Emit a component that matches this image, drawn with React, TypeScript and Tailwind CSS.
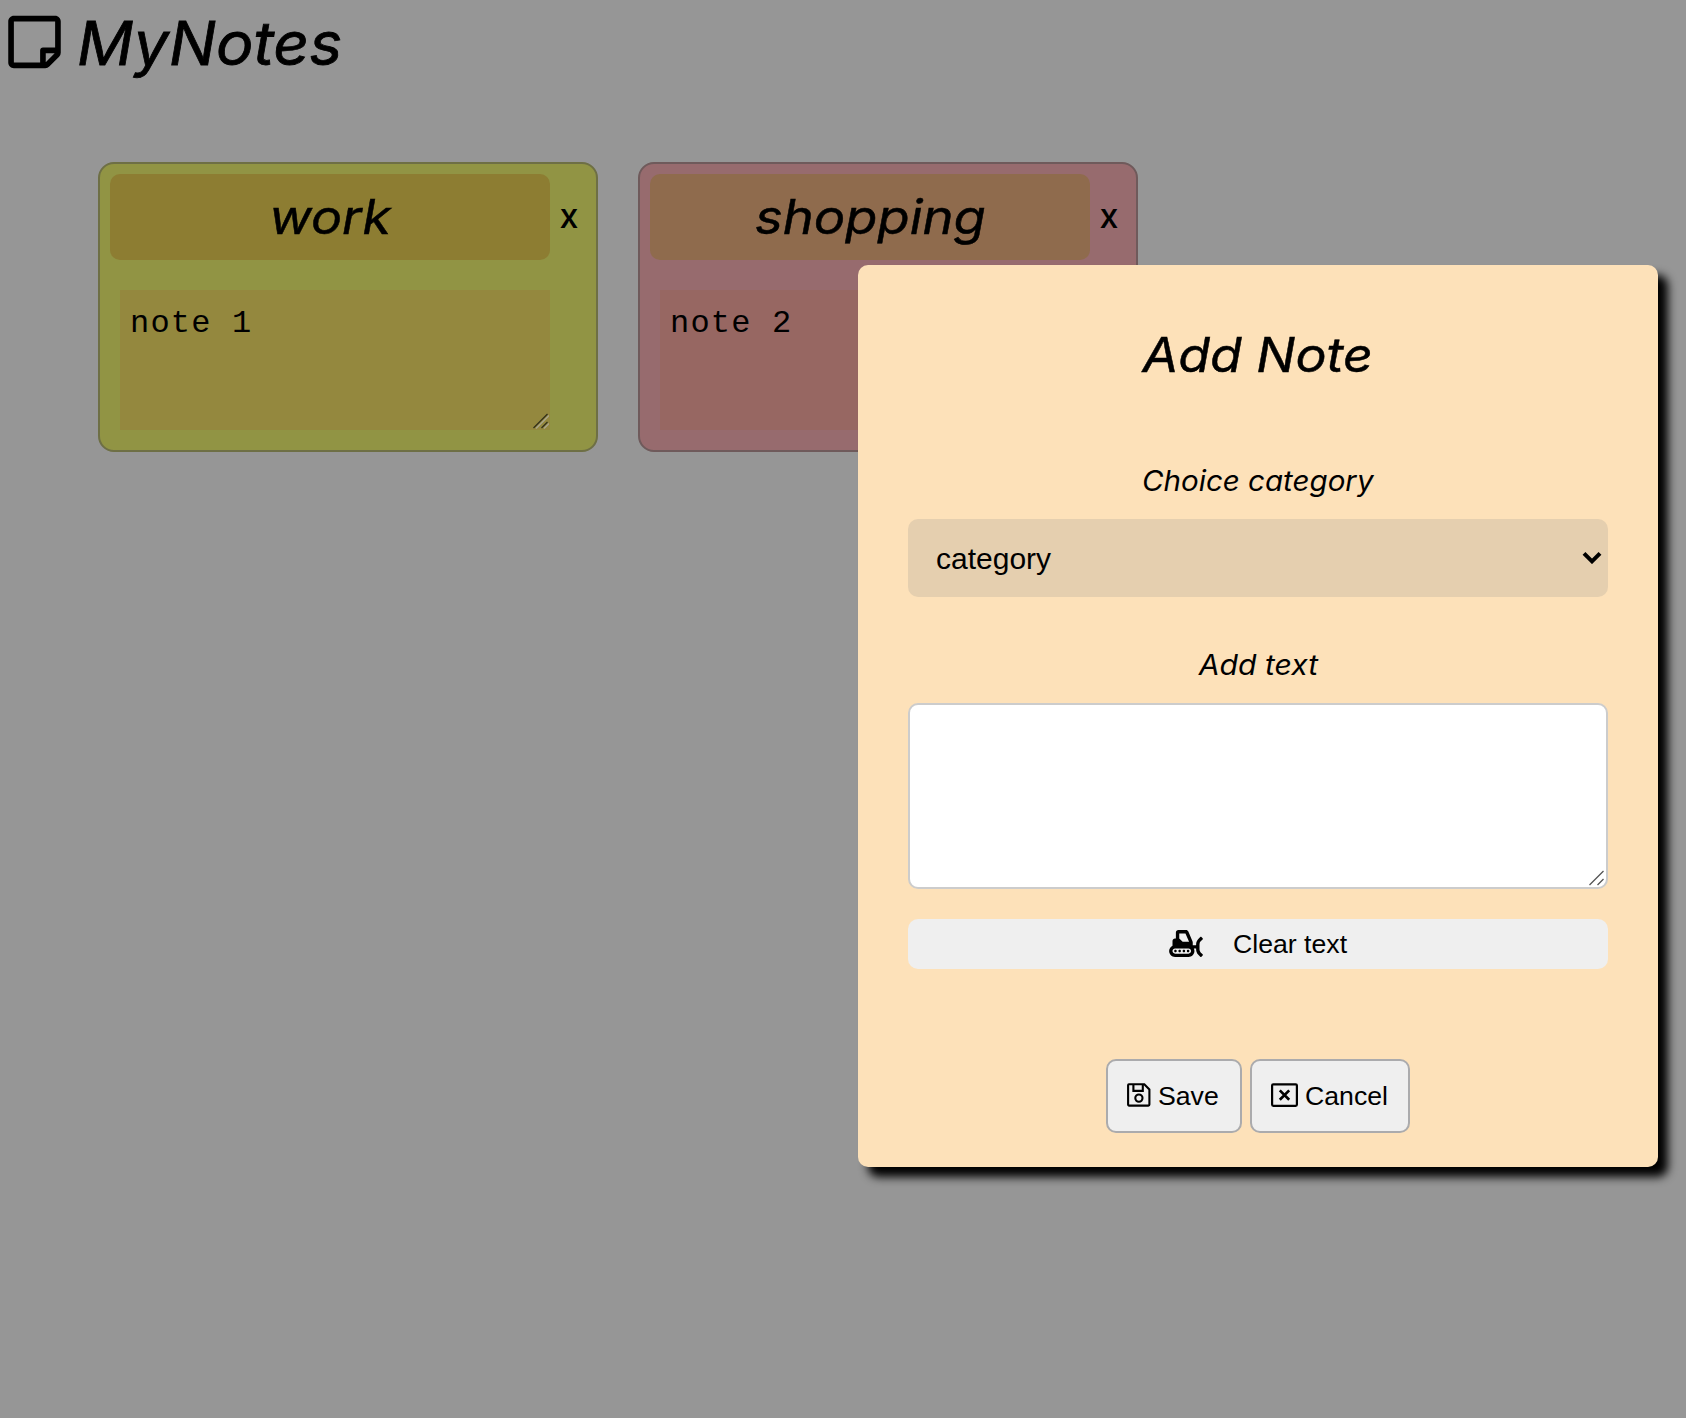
import { FaRegStickyNote, FaSnowplow } from "react-icons/fa";

type Note = {
  category: string;
  text: string;
  card: string;
  title: string;
  area: string;
  stretch: string;
};

const notes: Note[] = [
  {
    category: "work",
    text: "note 1",
    card: "bg-[#919444] border-[#6e6f45]",
    title: "bg-[#8d7d32]",
    area: "bg-[#94883e]",
    stretch: "scale-x-[1.08]",
  },
  {
    category: "shopping",
    text: "note 2",
    card: "bg-[#976b6e] border-[#6f5a5b]",
    title: "bg-[#8f6b4d]",
    area: "bg-[#976762]",
    stretch: "scale-x-[1.095]",
  },
];

function ResizeHandle({ light = false }: { light?: boolean }) {
  return (
    <svg className="absolute right-[1px] bottom-[1px] h-4 w-4" viewBox="0 0 16 16" fill="none">
      {light && <path d="M3 15.5 16 2.5M11 15.5l5-5" stroke="#aaa48c" strokeWidth="1.4" />}
      <path d="M.5 15 14.5 1M8.5 15l6-6" stroke={light ? "#33301a" : "#555"} strokeWidth="1.3" />
    </svg>
  );
}

function SaveIcon() {
  return (
    <svg className="h-6 w-6" viewBox="0 0 24 24" fill="none" stroke="#000" strokeWidth="2.1">
      <path d="M2 1.3h15.3l5.1 5.1v15.2a1 1 0 0 1-1 1H2.1a1 1 0 0 1-1-1V2.3a1 1 0 0 1 .9-1Z" />
      <path d="M6.4 1.5v6.4h9.4V1.5" />
      <circle cx="11.9" cy="15.1" r="3.6" />
    </svg>
  );
}

function CancelIcon() {
  return (
    <svg className="h-6 w-[27px]" viewBox="0 0 27 24" fill="none" stroke="#000">
      <rect x="1.1" y="1.4" width="24.8" height="21.4" rx="1.2" strokeWidth="2.2" />
      <path d="m8.8 7.4 9.4 9.4m0-9.4-9.4 9.4" strokeWidth="2.7" />
    </svg>
  );
}

function NoteCard({ note }: { note: Note }) {
  return (
    <article className={`flex h-[290px] w-[500px] flex-col rounded-[16px] border-2 p-[10px] ${note.card}`}>
      <div className="flex h-[86px]">
        <h2
          className={`flex w-[440px] shrink-0 items-center justify-center rounded-[10px] pl-px text-[48px] leading-[60px] italic [-webkit-text-stroke:0.5px_#000] ${note.title}`}
        >
          <span className={`inline-block ${note.stretch}`}>{note.category}</span>
        </h2>
        <button className="flex w-[38px] shrink-0 items-center justify-center pb-[2px] text-[34px] leading-[40px] font-medium">x</button>
      </div>
      <div
        className={`relative mt-[30px] ml-[10px] h-[140px] w-[430px] px-[10px] pt-[14px] font-['Liberation_Mono',monospace] text-[32px] leading-[40px] tracking-[1.2px] ${note.area}`}
      >
        {note.text}
        <ResizeHandle light />
      </div>
    </article>
  );
}

export default function App() {
  return (
    <div className="relative h-[1418px] w-[1686px] overflow-hidden bg-[#969696] font-['Inter',sans-serif] text-black">
      <header className="flex h-[86px] items-center pl-2">
        <FaRegStickyNote className="mt-[-3px] h-[60px] w-[53px]" />
        <h1 className="ml-[16px] origin-left scale-x-[1.04] text-[60px] leading-[86px] whitespace-nowrap italic [-webkit-text-stroke:0.8px_#000]">
          MyNotes
        </h1>
      </header>
      <main className="mt-[76px] ml-[98px] flex gap-10">
        {notes.map((note) => (
          <NoteCard key={note.category} note={note} />
        ))}
      </main>

      <section className="absolute top-[265px] left-[858px] flex h-[902px] w-[800px] flex-col items-center rounded-[10px] bg-[#fde1b9] px-[50px] shadow-[10px_10px_10px_#000]">
        <h2 className="mt-[60px] scale-x-[1.08] text-[48px] leading-[60px] whitespace-nowrap italic [-webkit-text-stroke:0.5px_#000]">
          Add Note
        </h2>
        <label className="mt-[76px] scale-x-[1.055] text-[28px] leading-[40px] whitespace-nowrap italic">Choice category</label>
        <div className="mt-[18px] flex h-[78px] w-full items-center justify-between rounded-[10px] bg-[#e5cfaf] pr-[6px] pl-[28px] font-['Liberation_Sans',Arial,sans-serif] text-[30px] leading-[40px]">
          <span className="pt-[2px]">category</span>
          <svg className="mt-[-2px] h-[13px] w-[20px]" viewBox="0 0 20 13" fill="none">
            <path d="m2 2.3 8 8 8-8" stroke="#000" strokeWidth="4" />
          </svg>
        </div>
        <label className="mt-[48px] scale-x-[1.075] text-[28px] leading-[40px] whitespace-nowrap italic">Add text</label>
        <div className="relative mt-[18px] h-[186px] w-full rounded-[10px] border-2 border-[#ccc] bg-white">
          <ResizeHandle />
        </div>
        <button className="mt-[30px] flex h-[50px] w-full items-center rounded-[10px] bg-[#efefef] pl-[261px] font-['Liberation_Sans',Arial,sans-serif] text-[26.67px] leading-[30px]">
          <FaSnowplow className="mt-[-2px] h-[27px] w-[34px]" />
          <span className="ml-[30px]">Clear text</span>
        </button>
        <div className="mt-[90px] flex gap-2 font-['Liberation_Sans',Arial,sans-serif] text-[26.67px] leading-[30px]">
          <button className="flex h-[74px] w-[136px] items-center rounded-[10px] border-2 border-[#ababad] bg-[#efefef] pl-[19px]">
            <span className="mt-[-2px]">
              <SaveIcon />
            </span>
            <span className="ml-[7px]">Save</span>
          </button>
          <button className="flex h-[74px] w-[160px] items-center rounded-[10px] border-2 border-[#ababad] bg-[#efefef] pl-[19px]">
            <span className="mt-[-2px]">
              <CancelIcon />
            </span>
            <span className="ml-[7px]">Cancel</span>
          </button>
        </div>
      </section>
    </div>
  );
}
